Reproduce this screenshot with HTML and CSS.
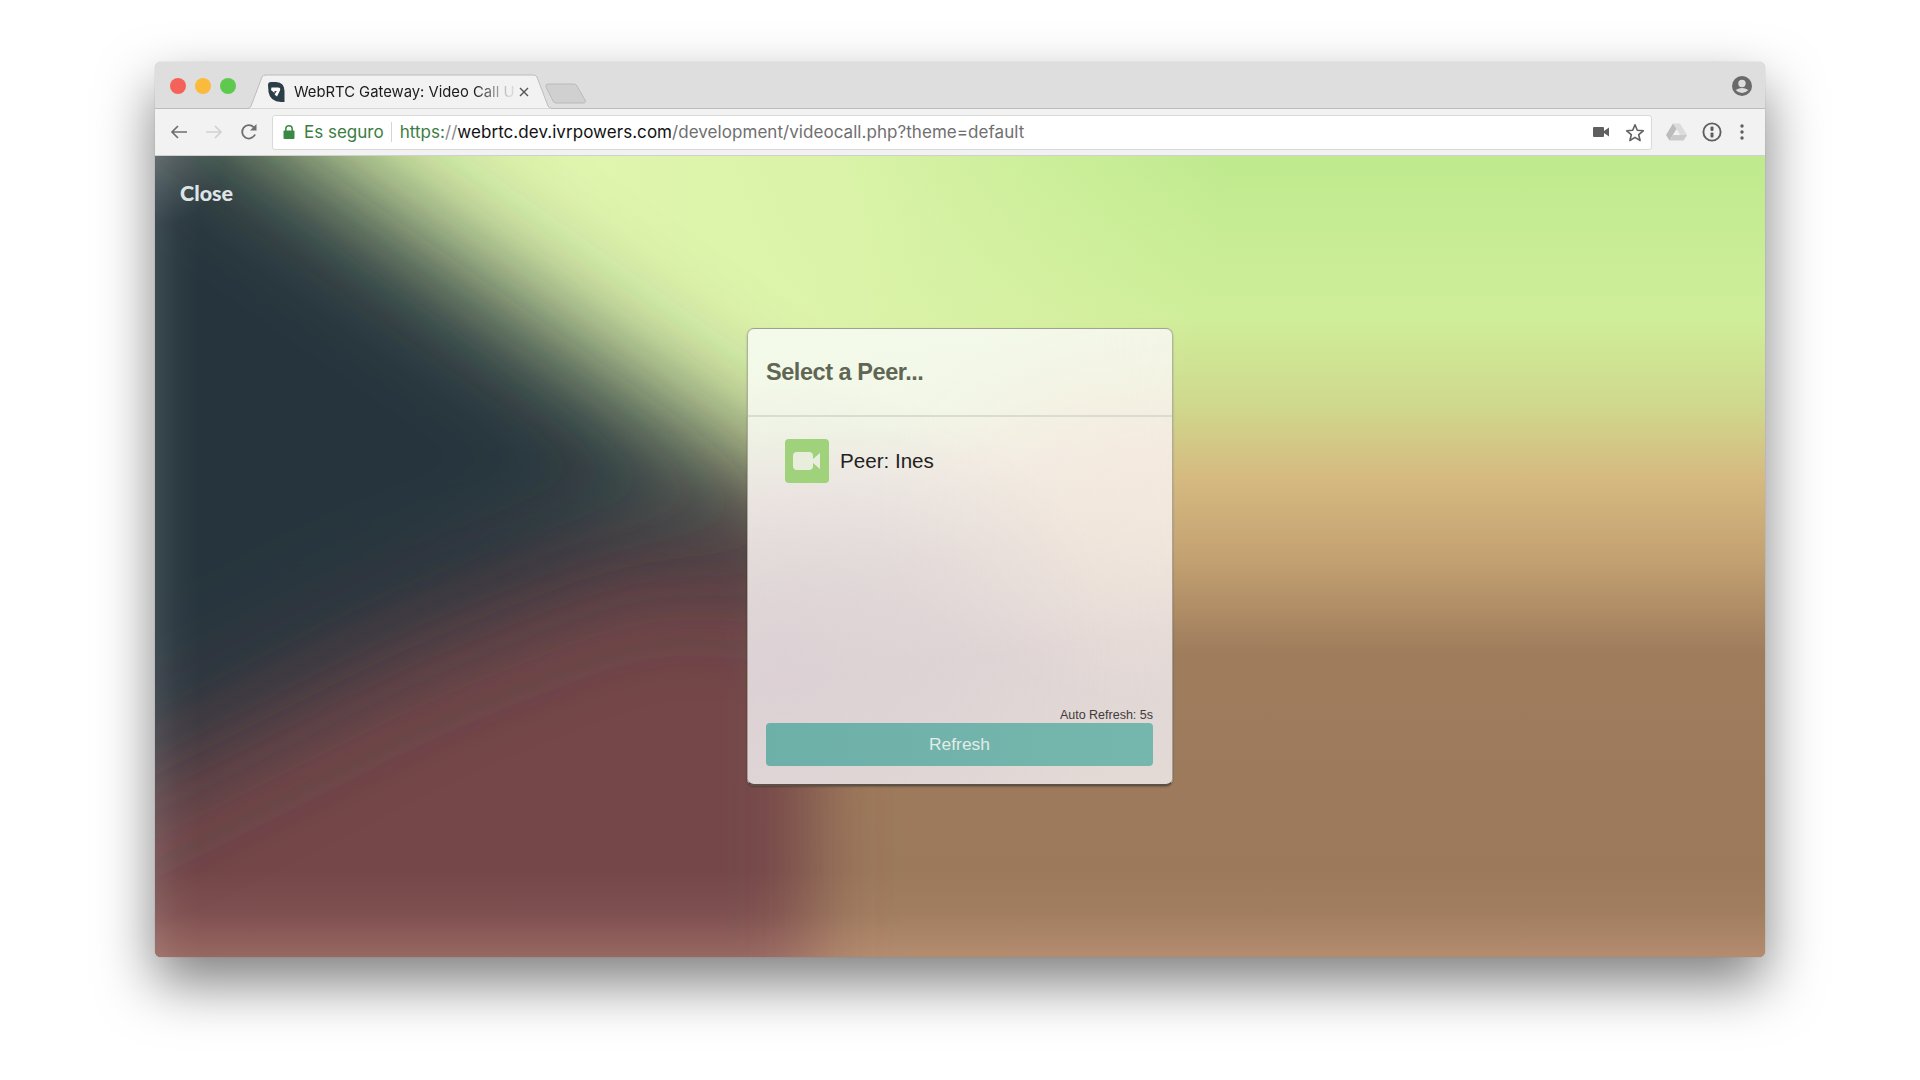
FILE: index.html
```html
<!DOCTYPE html>
<html lang="es">
<head>
<meta charset="utf-8">
<title>WebRTC Gateway: Video Call</title>
<link rel="stylesheet" href="styles.css">
</head>
<body>
<div class="window">
  <div class="tabstrip">
    <div class="lights"><span class="light red"></span><span class="light yellow"></span><span class="light green"></span></div>
    <div class="tab">
      <svg class="tab-shape" viewBox="0 0 305 35" preserveAspectRatio="none"><path d="M0 35 L2 34 Q3 34 4 32 L15 3 Q16 1 19 1 L286 1 Q289 1 290 3 L301 32 Q302 34 304 34 L305 35 Z" fill="#f2f2f2" stroke="#bcbcbc"/></svg>
      <svg class="favicon" viewBox="0 0 17 20"><path d="M0 3 Q0 0 3 0 H8 Q16.500 0.500 16.500 9 V20 H13 Q2 19.500 0.500 10 Z" fill="#2c3e48"/><path d="M3.500 5.500 H10 Q13 5.500 12 8.500 L9 14.500 L6.500 12.500 L8.800 9 H6.500 V11 L3 8 Z" fill="#fff"/></svg>
      <span class="tab-title">WebRTC Gateway: Video Call U</span>
      <svg class="tab-close" viewBox="0 0 10 10"><path d="M1 1 L9 9 M9 1 L1 9" stroke="#555" stroke-width="1.400"/></svg>
    </div>
    <svg class="newtab" viewBox="0 0 42 21"><path d="M3 1 H29 Q31 1 32 3 L40 17 Q41.500 20 38 20 H11 Q9 20 8 18 L1 4 Q0 1 3 1 Z" fill="#d0d0d0" stroke="#bababa"/></svg>
    <svg class="avatar" viewBox="0 0 20 20"><circle cx="10" cy="10" r="10" fill="#6a6a6c"/><circle cx="10" cy="7.500" r="3.700" fill="#ddd"/><path d="M3.600 14 Q10 9.800 16.400 14 Q13.500 17 10 17 Q6.500 17 3.600 14 Z" fill="#ddd"/></svg>
  </div>
  <div class="toolbar">
    <svg class="nav" viewBox="0 0 18 16"><path d="M17 8 H2 M8 2 L2 8 L8 14" fill="none" stroke="#6e6e6e" stroke-width="1.700"/></svg>
    <svg class="nav" viewBox="0 0 18 16"><path d="M1 8 H16 M10 2 L16 8 L10 14" fill="none" stroke="#d2d2d2" stroke-width="1.700"/></svg>
    <svg class="nav reload" viewBox="0 0 18 18"><path d="M15 11.500 A6.700 6.700 0 1 1 13.800 4.300" fill="none" stroke="#6e6e6e" stroke-width="1.800"/><path d="M16.500 1 V7.500 H10 Z" fill="#6e6e6e"/></svg>
    <div class="omnibox">
      <svg class="lock" viewBox="0 0 12 14"><path d="M2.800 6 V4 A3.200 3.200 0 0 1 9.200 4 V6" fill="none" stroke="#3a8a44" stroke-width="1.500"/><rect x="0.500" y="5.500" width="11" height="8.500" rx="1" fill="#3a8a44"/></svg>
      <span class="secure">Es seguro</span>
      <span class="divider"></span>
      <span class="url"><span class="scheme">https:</span><span class="slashes">//</span><span class="domain">webrtc.dev.ivrpowers.com</span><span class="path">/development/videocall.php?theme=default</span></span>
      <svg class="cam" viewBox="0 0 16 12"><rect x="0" y="1" width="11" height="10" rx="1" fill="#5f5f5f"/><path d="M11 5 L16 1.500 V10.500 L11 7 Z" fill="#5f5f5f"/></svg>
      <svg class="star" viewBox="0 0 20 19"><path d="M10 1.800 L12.300 7.300 L18.300 7.800 L13.700 11.700 L15.100 17.500 L10 14.400 L4.900 17.500 L6.300 11.700 L1.700 7.800 L7.700 7.300 Z" fill="none" stroke="#626262" stroke-width="1.600" stroke-linejoin="round"/></svg>
    </div>
    <svg class="drive" viewBox="0 0 21 18"><path d="M7 0.500 H14 L21 12 L17.500 17.500 Z" fill="#dcdcdc"/><path d="M7 0.500 L0 12 L3.500 17.500 L10.500 6 Z" fill="#bcbcbc"/><path d="M3.500 17.500 L7 12 H21 L17.500 17.500 Z" fill="#cbcbcb"/></svg>
    <svg class="onepass" viewBox="0 0 20 20"><circle cx="10" cy="10" r="8.600" fill="none" stroke="#5f5f5f" stroke-width="1.900"/><rect x="8.500" y="4.500" width="3" height="4.500" rx="1" fill="#5f5f5f"/><rect x="8.500" y="10.500" width="3" height="5" rx="1" fill="#5f5f5f"/></svg>
    <svg class="menu" viewBox="0 0 4 16"><circle cx="2" cy="2" r="1.700" fill="#5f5f5f"/><circle cx="2" cy="8" r="1.700" fill="#5f5f5f"/><circle cx="2" cy="14" r="1.700" fill="#5f5f5f"/></svg>
  </div>
  <main class="content">
    <svg class="backdrop" viewBox="0 0 1609 802" preserveAspectRatio="none">
      <defs>
        <linearGradient id="sky" x1="0" y1="0" x2="0" y2="1">
          <stop offset="0" stop-color="#bfea8e"/>
          <stop offset="0.2" stop-color="#cfee9a"/>
          <stop offset="0.31" stop-color="#cfd98d"/>
          <stop offset="0.4" stop-color="#d6ba80"/>
          <stop offset="0.5" stop-color="#c4a272"/>
          <stop offset="0.62" stop-color="#9f7c5c"/>
          <stop offset="1" stop-color="#9b785b"/>
        </linearGradient>
        <radialGradient id="glow" cx="430" cy="10" r="640" gradientUnits="userSpaceOnUse">
          <stop offset="0" stop-color="#e0f5ae"/>
          <stop offset="0.4" stop-color="#e0f5ae" stop-opacity="0.8"/>
          <stop offset="1" stop-color="#e0f5ae" stop-opacity="0"/>
        </radialGradient>
        <radialGradient id="corner" cx="0" cy="0" r="70" gradientUnits="userSpaceOnUse">
          <stop offset="0" stop-color="#fff" stop-opacity="0.15"/>
          <stop offset="1" stop-color="#fff" stop-opacity="0"/>
        </radialGradient>
        <linearGradient id="edgeL" x1="0" y1="0" x2="1" y2="0">
          <stop offset="0" stop-color="#fff" stop-opacity="0.1"/>
          <stop offset="0.5" stop-color="#fff" stop-opacity="0.03"/>
          <stop offset="1" stop-color="#fff" stop-opacity="0"/>
        </linearGradient>
        <linearGradient id="edgeB" x1="0" y1="0" x2="0" y2="1">
          <stop offset="0" stop-color="#ffc8aa" stop-opacity="0"/>
          <stop offset="0.5" stop-color="#ffc8aa" stop-opacity="0.07"/>
          <stop offset="1" stop-color="#ffc8aa" stop-opacity="0.25"/>
        </linearGradient>
        <filter id="blurA" x="-30%" y="-30%" width="160%" height="160%"><feGaussianBlur stdDeviation="62"/></filter>
        <filter id="blurB" x="-30%" y="-30%" width="160%" height="160%"><feGaussianBlur stdDeviation="38"/></filter>
      </defs>
      <rect width="1609" height="802" fill="url(#sky)"/>
      <rect width="1100" height="650" fill="url(#glow)"/>
      <path d="M-300 300 L600 350 L655 380 L655 1100 L-300 1100 Z" fill="#74464a" filter="url(#blurB)"/>
      <path d="M-300 -300 L-267 -300 L150 0 L720 400 L720 430 L500 395 L255 490 L0 620 L-300 770 Z" fill="#26343c" filter="url(#blurA)"/>
      <rect width="45" height="802" fill="url(#edgeL)"/>
      <rect width="70" height="70" fill="url(#corner)"/>
      <rect y="715" width="1609" height="87" fill="url(#edgeB)"/>
    </svg>
    <button class="close-link" type="button">Close</button>
    <section class="dialog">
      <header class="dialog-head"><h2>Select a Peer...</h2></header>
      <div class="dialog-body">
        <div class="peer">
          <span class="peer-icon"><svg viewBox="0 0 28 20"><rect x="0" y="1" width="20" height="18" rx="4" fill="#e8eedb"/><path d="M20 8 L27 2 V18 L20 12 Z" fill="#e8eedb"/></svg></span>
          <span class="peer-name">Peer: Ines</span>
        </div>
      </div>
      <footer class="dialog-foot">
        <div class="auto">Auto Refresh: 5s</div>
        <button class="refresh" type="button">Refresh</button>
      </footer>
    </section>
  </main>
</div>
</body>
</html>
```
FILE: styles.css
```css
* { box-sizing: border-box; }
html, body { margin: 0; height: 100%; background: #fff; overflow: hidden; }
body { padding: 62px 155px 0; font-family: "Liberation Sans", Arial, sans-serif; }

.window {
  width: 1610px;
  height: 895px;
  display: flex;
  flex-direction: column;
  border-radius: 6px;
  overflow: hidden;
  background: #ddd;
  box-shadow: 0 26px 56px rgba(0, 0, 0, .5), 0 0 1px rgba(0, 0, 0, .35);
}
.tabstrip {
  height: 47px;
  flex: none;
  display: flex;
  align-items: flex-end;
  background: #dedede;
  border-bottom: 1px solid #bcbcbc;
  padding-left: 15px;
}
.lights { display: flex; gap: 9px; align-self: flex-start; margin-top: 16px; }
.light { width: 16px; height: 16px; border-radius: 50%; }
.light.red { background: #f4625a; }
.light.yellow { background: #fabb3d; }
.light.green { background: #5fc94f; }

.tab {
  position: relative;
  width: 305px;
  height: 35px;
  margin: 0 0 -1px 11px;
  display: flex;
  align-items: center;
  padding: 0 23px 0 21px;
}
.tab-shape { position: absolute; inset: 0; width: 100%; height: 100%; }
.favicon { position: relative; width: 17px; height: 20px; flex: none; }
.tab-title {
  position: relative;
  flex: none;
  margin-left: 9px;
  font: 14.8px "Inter", sans-serif;
  color: #1c1c1c;
  white-space: nowrap;
  -webkit-mask-image: linear-gradient(90deg, #000 82%, rgba(0, 0, 0, .12) 98%);
  mask-image: linear-gradient(90deg, #000 82%, rgba(0, 0, 0, .12) 98%);
}
.tab-close { position: relative; width: 10px; height: 10px; margin-left: auto; flex: none; }
.newtab { width: 42px; height: 21px; flex: none; margin: 0 0 4px -7px; }
.avatar { width: 20px; height: 20px; flex: none; margin: 14px 13px 0 auto; align-self: flex-start; }

.toolbar {
  height: 47px;
  flex: none;
  display: flex;
  align-items: center;
  background: #f2f2f2;
  border-bottom: 1px solid #d0d0d0;
  padding-left: 15px;
}
.nav { width: 18px; height: 16px; flex: none; margin-right: 17px; }
.nav.reload { width: 18px; height: 18px; margin-right: 14px; }
.omnibox {
  width: 1380px;
  height: 35px;
  flex: none;
  display: flex;
  align-items: center;
  background: #fff;
  border: 1px solid #d9d9d9;
  border-radius: 3px;
  padding-left: 10px;
}
.lock { width: 12px; height: 14px; flex: none; }
.secure { margin-left: 9px; font: 17px "Inter", sans-serif; color: #3b7d43; }
.divider { width: 1px; height: 20px; background: #d5d5d5; margin: 0 8px 0 7px; }
.url { font: 17px "Inter", sans-serif; letter-spacing: .05px; white-space: nowrap; color: #6f6f6f; }
.scheme { color: #3b7d43; }
.slashes { color: #8a8a8a; }
.domain { color: #111; }
.path { color: #6f6f6f; }
.cam { width: 16px; height: 12px; flex: none; margin-left: auto; }
.star { width: 20px; height: 19px; flex: none; margin: 0 6px 0 16px; }
.drive { width: 21px; height: 18px; flex: none; margin-left: 14px; }
.onepass { width: 20px; height: 20px; flex: none; margin-left: 15px; }
.menu { width: 4px; height: 16px; flex: none; margin-left: 18px; }

.content {
  position: relative;
  flex: 1;
  display: flex;
  align-items: center;
  justify-content: center;
  overflow: hidden;
  background: #9b785b;
}
.backdrop { position: absolute; inset: 0; width: 100%; height: 100%; }
.close-link {
  position: absolute;
  left: 25px;
  top: 24px;
  padding: 0;
  border: 0;
  background: none;
  font: 900 21.5px "Lato", sans-serif;
  color: #dfe4e6;
}
.dialog {
  position: relative;
  width: 426px;
  height: 458px;
  display: flex;
  flex-direction: column;
  border-radius: 7px;
  border: 1px solid rgba(70, 80, 50, .4);
  border-bottom: 2px solid rgba(40, 25, 15, .75);
  background:
    radial-gradient(ellipse at 8% 72%, rgba(218, 206, 212, .7), rgba(218, 206, 212, 0) 60%),
    radial-gradient(ellipse at 100% 38%, rgba(246, 233, 220, .8), rgba(246, 233, 220, 0) 50%),
    linear-gradient(172deg, #f4faea 0%, #f2f7e7 22%, #f2eee6 33%, #e8e1dc 50%, #e0d6d5 70%, #e3dad6 100%);
  box-shadow: 0 1px 2px rgba(0, 0, 0, .25);
}
.dialog-head {
  height: 88px;
  flex: none;
  display: flex;
  align-items: center;
  padding: 1px 18px 0;
  border-bottom: 2px solid #d9dccf;
}
.dialog-head h2 { margin: 0; font-size: 23.5px; font-weight: 700; color: #5f6754; letter-spacing: -.45px; }
.dialog-body { flex: 1; padding: 22px 37px; }
.peer { display: flex; align-items: center; gap: 11px; }
.peer-icon {
  width: 44px;
  height: 44px;
  display: flex;
  align-items: center;
  justify-content: center;
  background: #9fd27a;
  border-radius: 4px;
}
.peer-icon svg { width: 28px; height: 20px; }
.peer-name { font-size: 20.6px; color: #222; }
.dialog-foot { padding: 0 19px 18px 18px; }
.auto { font-size: 12.5px; text-align: right; color: #3f3b3a; line-height: 16px; }
.refresh {
  display: block;
  width: 100%;
  height: 43px;
  border: 0;
  border-radius: 4px;
  background: linear-gradient(90deg, #6db0a8, #76b7ad);
  font: 17.4px "Liberation Sans", Arial, sans-serif;
  color: #e2ece8;
}
```
